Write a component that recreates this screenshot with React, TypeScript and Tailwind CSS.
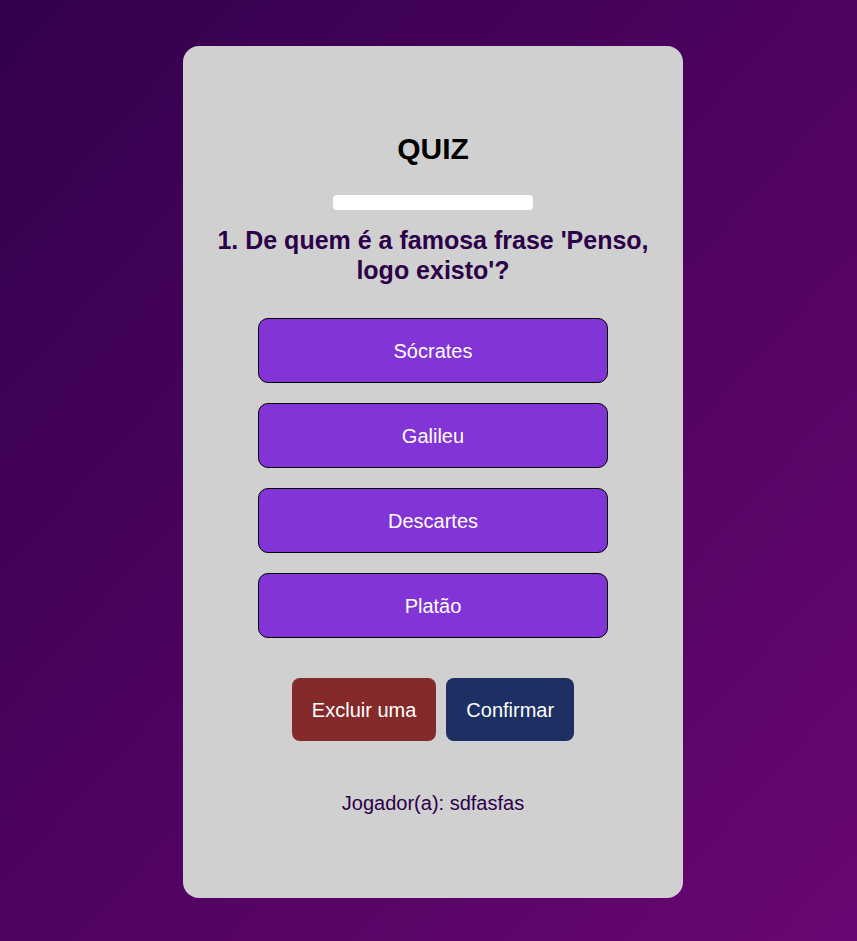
const options = ['Sócrates', 'Galileu', 'Descartes', 'Platão'];

export default function App() {
  return (
    <div
      className="min-h-screen w-full flex items-start justify-center bg-gradient-to-br from-[#33004c] to-[#6a0673] pt-[46px] pl-[9px]"
      style={{ fontFamily: '"Liberation Sans", Arial, sans-serif' }}
    >
      <div className="w-[500px] h-[852px] bg-[#d0d0d0] rounded-2xl flex flex-col items-center pt-[85px]">
        <h1 className="text-[30px] leading-[35px] font-bold text-black">QUIZ</h1>

        {/* progress bar */}
        <div className="mt-[29px] w-[200px] h-[15px] bg-white rounded-[4px]" />

        <h2 className="mt-[15px] w-[440px] text-center text-[25px] leading-[30px] font-bold text-[#2b0049]">
          1. De quem é a famosa frase 'Penso, logo existo'?
        </h2>

        <div className="mt-[33px] flex flex-col gap-[20px]">
          {options.map((opt) => (
            <button
              key={opt}
              className="w-[350px] h-[65px] bg-[#8234d6] border border-black rounded-[10px] text-white text-[20px]"
            >
              {opt}
            </button>
          ))}
        </div>

        <div className="mt-[40px] flex gap-[10px]">
          <button className="h-[63px] px-[20px] bg-[#842a2a] rounded-[8px] text-white text-[20px]">
            Excluir uma
          </button>
          <button className="h-[63px] px-[20px] bg-[#1d2f63] rounded-[8px] text-white text-[20px]">
            Confirmar
          </button>
        </div>

        <p className="mt-[51px] text-[20px] leading-[23px] text-[#2b0049]">Jogador(a): sdfasfas</p>
      </div>
    </div>
  );
}
